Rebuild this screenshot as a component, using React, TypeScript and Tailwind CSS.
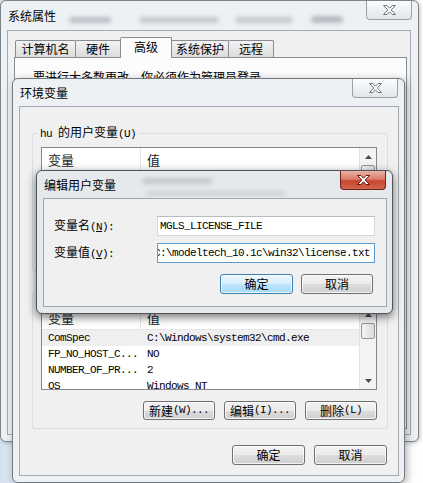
import React from "react";

const CJK = "font-['Noto_Sans_CJK_SC',sans-serif]";
const MONO = "font-['Liberation_Mono','Noto_Sans_CJK_SC',monospace] text-[11px] tracking-[-0.6px]";

function XGlyph({ red }: { red?: boolean }) {
  return (
    <svg width="15" height="12" viewBox="0 0 15 12">
      <path
        d="M1.5 1.5h3.4l2.6 2.7 2.6-2.7h3.4l-4.3 4.5 4.3 4.5h-3.4l-2.6-2.7-2.6 2.7h-3.4l4.3-4.5z"
        fill="#fff"
        stroke={red ? "#5a1a10" : "#6f767d"}
        strokeWidth="1"
        strokeLinejoin="round"
      />
    </svg>
  );
}

function CloseButton({ red }: { red?: boolean }) {
  return (
    <div
      className={`absolute right-[6px] top-0 flex h-[19px] w-[46px] items-center justify-center rounded-b-[4px] border border-t-0 ${
        red
          ? "border-[#6b2418] bg-[linear-gradient(#eab1a5_0%,#dc7d6c_45%,#c8442e_55%,#d2654f_100%)]"
          : "border-[#9aa1a8] bg-[linear-gradient(#fdfdfe_0%,#eef1f4_50%,#e2e6ea_100%)]"
      }`}
    >
      <XGlyph red={red} />
    </div>
  );
}

function Btn({
  children,
  className = "",
  primary = false,
}: {
  children: React.ReactNode;
  className?: string;
  primary?: boolean;
}) {
  return (
    <div
      className={`flex items-center justify-center whitespace-nowrap rounded-[3px] border text-[12px] leading-none shadow-[inset_0_0_0_1px_rgba(255,255,255,0.75)] ${
        primary
          ? "border-[#3c7fb1] bg-[linear-gradient(#eaf6fd_0%,#d9f0fc_50%,#bee6fd_51%,#a7d9f5_100%)]"
          : "border-[#707070] bg-[linear-gradient(#f2f2f2_0%,#ebebeb_50%,#dddddd_51%,#cfcfcf_100%)]"
      } ${className}`}
    >
      {children}
    </div>
  );
}

function Arrow({ down }: { down?: boolean }) {
  return (
    <svg width="7" height="4" viewBox="0 0 7 4">
      <path d={down ? "M0 0h7L3.5 4z" : "M0 4h7L3.5 0z"} fill="#4a4a4a" />
    </svg>
  );
}

function Scrollbar() {
  return (
    <div className="flex w-[17px] shrink-0 flex-col border-l border-[#e3e3e3] bg-[#f3f3f3]">
      <div className="flex h-[17px] shrink-0 items-center justify-center">
        <Arrow />
      </div>
      <div className="mx-[1px] h-[16px] shrink-0 rounded-[2px] border border-[#979797] bg-[linear-gradient(90deg,#f4f4f4,#dcdcdc)]" />
      <div className="flex-1" />
      <div className="flex h-[17px] shrink-0 items-center justify-center">
        <Arrow down />
      </div>
    </div>
  );
}

function ListView({ rows, selected = -1 }: { rows: [string, string][]; selected?: number }) {
  return (
    <div className="flex h-[85px] border border-[#828790] bg-white">
      <div className="flex min-w-0 flex-1 flex-col overflow-hidden">
        <div className={`flex h-[24px] shrink-0 items-center border-b border-[#e5e5e5] text-[13px] text-[#1b1b1b] ${CJK}`}>
          <div className="flex h-full w-[99px] items-center border-r border-[#e5e5e5] pl-[6px]">变量</div>
          <div className="pl-[6px]">值</div>
        </div>
        {rows.map(([k, v], i) => (
          <div
            key={k}
            className={`flex h-[16px] shrink-0 items-center whitespace-nowrap ${MONO} ${
              i === selected ? "bg-[#efefef]" : ""
            }`}
          >
            <div className="w-[99px] shrink-0 overflow-hidden pl-[6px]">{k}</div>
            <div className="pl-[6px]">{v}</div>
          </div>
        ))}
      </div>
      <Scrollbar />
    </div>
  );
}

function Group({
  legend,
  rows,
  selected,
  buttons = true,
}: {
  legend: React.ReactNode;
  rows: [string, string][];
  selected?: number;
  buttons?: boolean;
}) {
  return (
    <fieldset className="ml-[12px] h-[147px] w-[356px] rounded-[3px] border border-[#d5dfe5] pl-[8px] pr-[10px]">
      <legend className={`-ml-[3px] px-[2px] text-[12px] leading-[16px] ${CJK}`}>{legend}</legend>
      <div className="mt-[5px]">
        <ListView rows={rows} selected={selected} />
      </div>
      {/* the user group's buttons sit under the edit dialog */}
      {buttons && (
        <div className={`mt-[11px] flex justify-end gap-[9px] ${CJK}`}>
          <Btn className="h-[19px] w-[72px]">
            新建<span className={MONO}>(W)...</span>
          </Btn>
          <Btn className="h-[19px] w-[72px]">
            编辑<span className={MONO}>(I)...</span>
          </Btn>
          <Btn className="h-[19px] w-[72px]">
            删除<span className={MONO}>(L)</span>
          </Btn>
        </div>
      )}
    </fieldset>
  );
}

const tabs = ["计算机名", "硬件", "高级", "系统保护", "远程"];
const tabWidths = ["w-[61px]", "w-[46px]", "w-[52px]", "w-[58px]", "w-[46px]"];

export default function App() {
  return (
    <div className={`relative h-[483px] w-[423px] overflow-hidden bg-[linear-gradient(90deg,#d5e3f0,#f3f6f9_20%,#ffffff)] text-black ${CJK}`}>
      {/* 系统属性 */}
      <div className="absolute left-0 top-0 h-[442px] w-[419px] rounded-[6px] border border-[#7d848b] bg-[#eef1f4] shadow-[1px_1px_4px_rgba(0,0,0,0.25)]">
        <div className="flex h-[29px] items-center pl-[7px] text-[12px]">
          <span>系统属性</span>
          <div className="ml-[13px] mt-[8px] flex items-center">
            <div className="h-[6px] w-[42px] rounded-full bg-[#b8bec5] blur-[2px]" />
            <div className="ml-[28px] h-[6px] w-[80px] rounded-full bg-[#c2c7cd] blur-[2px]" />
            <div className="ml-[16px] h-[6px] w-[58px] rounded-full bg-[#c4c9ce] blur-[2px]" />
            <div className="ml-[18px] h-[7px] w-[32px] rounded-full bg-[#b4bac0] blur-[2px]" />
          </div>
        </div>
        <CloseButton />
        <div className="ml-[6px] h-[405px] w-[404px] border border-[#a3aab1] bg-[#f0f0f0]">
          <div className="ml-[6px] flex h-[26px] items-end pl-[2px]">
            {tabs.map((t, i) => (
              <div
                key={t}
                className={`-ml-px flex items-center justify-center rounded-t-[2px] border border-b-0 border-[#898c95] text-[12px] ${tabWidths[i]} ${
                  i === 2
                    ? "relative z-10 -mb-px h-[21px] bg-[#fcfcfc] pb-[3px]"
                    : "h-[17px] bg-[linear-gradient(#f3f3f3,#dcdcdc)]"
                }`}
              >
                {t}
              </div>
            ))}
          </div>
          <div className="ml-[6px] h-[372px] w-[393px] border border-[#898c95] bg-[#fcfcfc] pl-[18px] pt-[11px] text-[12px] leading-[16px]">
            要进行大多数更改，你必须作为管理员登录。
          </div>
        </div>
      </div>

      {/* 环境变量 */}
      <div className="absolute left-[12px] top-[78px] h-[405px] w-[393px] rounded-[6px] border border-[#737a81] bg-[#eef1f4] shadow-[2px_2px_8px_rgba(0,0,0,0.3)]">
        <div className="flex h-[27px] items-center pl-[7px] text-[12px]">环境变量</div>
        <CloseButton />
        <div className="ml-[6px] flex h-[370px] w-[380px] flex-col border border-[#a3aab1] bg-[#f0f0f0]">
          <div className="mt-[17px]">
            <Group
              buttons={false}
              legend={
                <>
                  <span className={MONO}>hu </span>的用户变量<span className={MONO}>(U)</span>
                </>
              }
              rows={[]}
            />
          </div>
          <div className="mt-[11px]">
            <Group
              legend={
                <>
                  系统变量<span className={MONO}>(S)</span>
                </>
              }
              selected={0}
              rows={[
                ["ComSpec", "C:\\Windows\\system32\\cmd.exe"],
                ["FP_NO_HOST_C...", "NO"],
                ["NUMBER_OF_PR...", "2"],
                ["OS", "Windows_NT"],
              ]}
            />
          </div>
          <div className="mt-[16px] flex justify-end gap-[9px] pr-[11px]">
            <Btn className="h-[20px] w-[73px]">确定</Btn>
            <Btn className="h-[20px] w-[73px]">取消</Btn>
          </div>
        </div>
      </div>

      {/* 编辑用户变量 */}
      <div className="absolute left-[36px] top-[170px] h-[144px] w-[357px] rounded-[6px] border border-[#4f555b] bg-[#e6e9ec] shadow-[0_3px_10px_rgba(0,0,0,0.55)]">
        <div className="flex h-[27px] items-center pl-[7px] text-[12px]">
          <span>编辑用户变量</span>
          <div className="ml-[26px] mt-[4px] flex flex-col gap-[7px]">
            <div className="h-[6px] w-[70px] rounded-full bg-[#c3c8cd] blur-[2px]" />
            <div className="ml-[4px] h-[5px] w-[140px] rounded-full bg-[#cdd1d5] blur-[2px]" />
          </div>
        </div>
        <CloseButton red />
        <div className="ml-[6px] h-[109px] w-[344px] border border-[#9fa6ad] bg-[#f0f0f0] pt-[17px] text-[12px]">
          <div className="flex items-center">
            <div className="w-[113px] pl-[10px]">
              变量名<span className={MONO}>(<u>N</u>):</span>
            </div>
            <div className={`flex h-[20px] w-[218px] items-center border border-[#d3d7dc] border-t-[#b9bdc2] bg-white pl-[2px] ${MONO}`}>
              MGLS_LICENSE_FILE
            </div>
          </div>
          <div className="mt-[7px] flex items-center">
            <div className="w-[113px] pl-[10px]">
              变量值<span className={MONO}>(<u>V</u>):</span>
            </div>
            <div className={`flex h-[20px] w-[218px] items-center justify-end overflow-hidden whitespace-nowrap border border-[#5b9bd0] bg-white pr-[4px] ${MONO}`}>
              <span className="shrink-0">C:\modeltech_10.1c\win32\license.txt</span>
            </div>
          </div>
          <div className="mt-[11px] flex justify-end gap-[8px] pr-[13px]">
            <Btn primary className="h-[20px] w-[73px]">确定</Btn>
            <Btn className="h-[20px] w-[72px]">取消</Btn>
          </div>
        </div>
      </div>
    </div>
  );
}
